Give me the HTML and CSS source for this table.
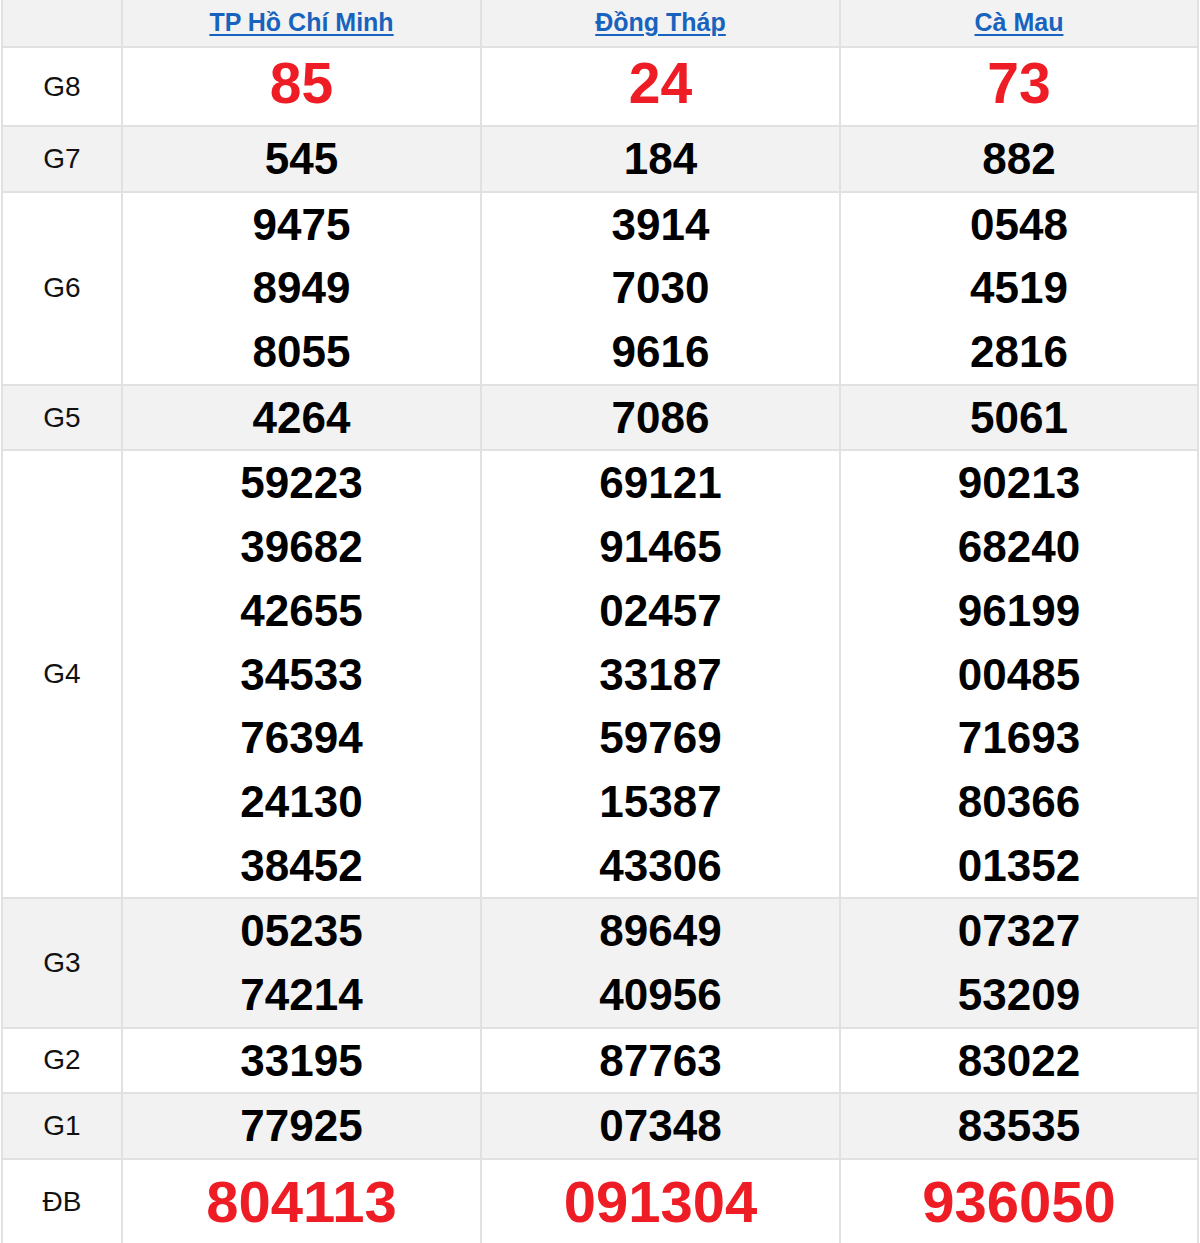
FILE: index.html
```html
<!DOCTYPE html>
<html lang="vi">
<head>
<meta charset="utf-8">
<title>Kết quả xổ số</title>
<link rel="stylesheet" href="styles.css">
</head>
<body>
<table class="kq">
  <colgroup>
    <col class="c-label">
    <col class="c-prov">
    <col class="c-prov">
    <col class="c-prov last">
  </colgroup>
  <thead>
    <tr class="head">
      <th></th>
      <th><a href="#">TP Hồ Chí Minh</a></th>
      <th><a href="#">Đồng Tháp</a></th>
      <th><a href="#">Cà Mau</a></th>
    </tr>
  </thead>
  <tbody>
    <tr class="g8">
      <td class="lbl">G8</td>
      <td><div class="n big">85</div></td>
      <td><div class="n big">24</div></td>
      <td><div class="n big">73</div></td>
    </tr>
    <tr class="alt">
      <td class="lbl">G7</td>
      <td><div class="n">545</div></td>
      <td><div class="n">184</div></td>
      <td><div class="n">882</div></td>
    </tr>
    <tr>
      <td class="lbl">G6</td>
      <td><div class="n">9475</div><div class="n">8949</div><div class="n">8055</div></td>
      <td><div class="n">3914</div><div class="n">7030</div><div class="n">9616</div></td>
      <td><div class="n">0548</div><div class="n">4519</div><div class="n">2816</div></td>
    </tr>
    <tr class="alt">
      <td class="lbl">G5</td>
      <td><div class="n">4264</div></td>
      <td><div class="n">7086</div></td>
      <td><div class="n">5061</div></td>
    </tr>
    <tr>
      <td class="lbl">G4</td>
      <td><div class="n">59223</div><div class="n">39682</div><div class="n">42655</div><div class="n">34533</div><div class="n">76394</div><div class="n">24130</div><div class="n">38452</div></td>
      <td><div class="n">69121</div><div class="n">91465</div><div class="n">02457</div><div class="n">33187</div><div class="n">59769</div><div class="n">15387</div><div class="n">43306</div></td>
      <td><div class="n">90213</div><div class="n">68240</div><div class="n">96199</div><div class="n">00485</div><div class="n">71693</div><div class="n">80366</div><div class="n">01352</div></td>
    </tr>
    <tr class="alt">
      <td class="lbl">G3</td>
      <td><div class="n">05235</div><div class="n">74214</div></td>
      <td><div class="n">89649</div><div class="n">40956</div></td>
      <td><div class="n">07327</div><div class="n">53209</div></td>
    </tr>
    <tr>
      <td class="lbl">G2</td>
      <td><div class="n">33195</div></td>
      <td><div class="n">87763</div></td>
      <td><div class="n">83022</div></td>
    </tr>
    <tr class="alt">
      <td class="lbl">G1</td>
      <td><div class="n">77925</div></td>
      <td><div class="n">07348</div></td>
      <td><div class="n">83535</div></td>
    </tr>
    <tr class="db">
      <td class="lbl">ĐB</td>
      <td><div class="n special">804113</div></td>
      <td><div class="n special">091304</div></td>
      <td><div class="n special">936050</div></td>
    </tr>
  </tbody>
</table>
</body>
</html>
```

FILE: styles.css
```css
html, body {
  margin: 0;
  padding: 0;
  background: #ffffff;
}

body {
  font-family: "Liberation Sans", Arial, sans-serif;
  color: #000000;
}

.kq {
  margin-left: 1px;
  border-collapse: separate;
  border-spacing: 0;
  table-layout: fixed;
  width: 1198px;
}

.c-label { width: 122px; }
.c-prov { width: 359px; }
.c-prov.last { width: 358px; }

.kq th,
.kq td {
  padding: 0;
  text-align: center;
  vertical-align: middle;
  border-right: 2px solid #e1e1e1;
  border-bottom: 2px solid #e1e1e1;
}

.kq th:first-child,
.kq td:first-child {
  border-left: 2px solid #e1e1e1;
}

.head th {
  height: 46px;
  background: #f2f2f2;
  font-size: 25px;
  font-weight: bold;
  line-height: 44px;
  vertical-align: top;
}

.head a {
  color: #1763bd;
  text-decoration: underline;
  text-decoration-thickness: 2px;
  text-underline-offset: 3px;
}

.alt td {
  background: #f2f2f2;
}

.lbl {
  font-size: 28px;
  font-weight: normal;
  color: #111111;
}

.n {
  font-size: 44px;
  font-weight: bold;
  line-height: 63.7px;
  height: 63.7px;
}

.g8 .n {
  height: 71px;
  line-height: 71px;
  padding-bottom: 6px;
}

.big {
  color: #ee1c25;
  font-size: 57px;
}

.special {
  color: #ee1c25;
  font-size: 58px;
}

.db .n {
  height: 84px;
  line-height: 84px;
}
```
